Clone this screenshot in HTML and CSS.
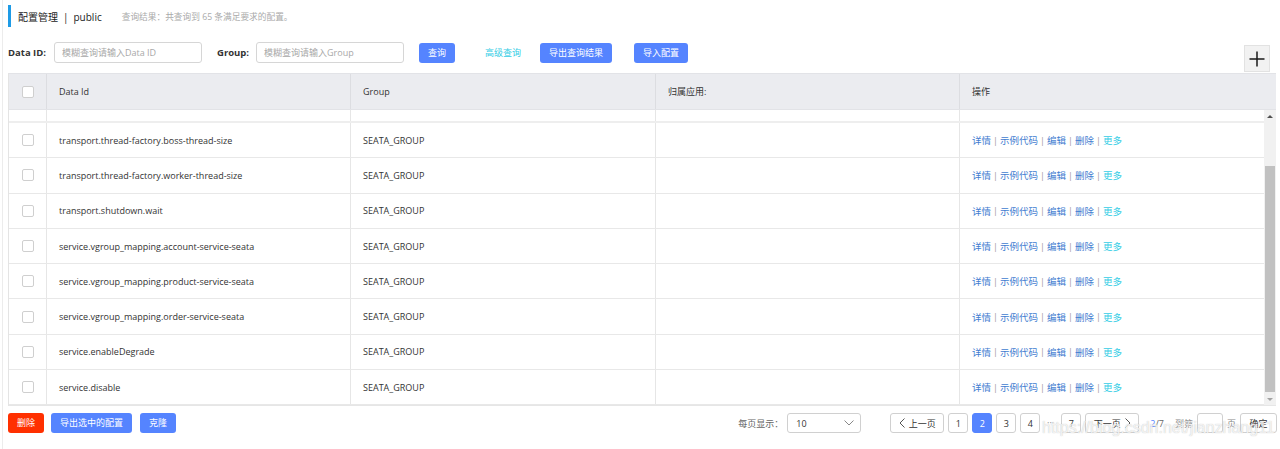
FILE: index.html
```html
<!DOCTYPE html>
<html lang="zh-CN">
<head>
<meta charset="utf-8">
<title>配置管理 | public</title>
<link rel="stylesheet" href="styles.css">
</head>
<body>
<div class="page">
  <div class="title-bar">
    <span class="title">配置管理<span class="title-sep">|</span>public</span>
    <span class="subtitle">查询结果：共查询到 65 条满足要求的配置。</span>
  </div>

  <div class="search">
    <label class="field-label label-id">Data ID:</label>
    <input class="input" type="text" placeholder="模糊查询请输入Data ID">
    <label class="field-label label-group">Group:</label>
    <input class="input" type="text" placeholder="模糊查询请输入Group">
    <button class="btn btn-primary btn-query">查询</button>
    <a class="link-advanced">高级查询</a>
    <button class="btn btn-primary btn-export">导出查询结果</button>
    <button class="btn btn-primary btn-import">导入配置</button>
    <button class="btn-add" aria-label="新建配置">
      <svg width="16" height="16" viewBox="0 0 16 16"><path d="M8 0.5V15.5M0.5 8H15.5" stroke="#1a1a1a" stroke-width="1.5" fill="none"/></svg>
    </button>
  </div>

  <div class="table">
    <div class="thead">
      <div class="cell cell-check"><span class="checkbox"></span></div>
      <div class="cell">Data Id</div>
      <div class="cell">Group</div>
      <div class="cell">归属应用:</div>
      <div class="cell cell-last">操作</div>
    </div>
    <div class="tbody">
      <div class="viewport">
        <div class="rows">
          <div class="row row-prev">
            <div class="cell cell-check"></div>
            <div class="cell"></div>
            <div class="cell"></div>
            <div class="cell"></div>
            <div class="cell cell-last"></div>
          </div>
          <div class="row">
            <div class="cell cell-check"><span class="checkbox"></span></div>
            <div class="cell">transport.thread-factory.boss-thread-size</div>
            <div class="cell">SEATA_GROUP</div>
            <div class="cell"></div>
            <div class="cell cell-last actions"><a class="act">详情</a><span class="sep">|</span><a class="act">示例代码</a><span class="sep">|</span><a class="act">编辑</a><span class="sep">|</span><a class="act">删除</a><span class="sep">|</span><a class="act act-more">更多</a></div>
          </div>
          <div class="row">
            <div class="cell cell-check"><span class="checkbox"></span></div>
            <div class="cell">transport.thread-factory.worker-thread-size</div>
            <div class="cell">SEATA_GROUP</div>
            <div class="cell"></div>
            <div class="cell cell-last actions"><a class="act">详情</a><span class="sep">|</span><a class="act">示例代码</a><span class="sep">|</span><a class="act">编辑</a><span class="sep">|</span><a class="act">删除</a><span class="sep">|</span><a class="act act-more">更多</a></div>
          </div>
          <div class="row">
            <div class="cell cell-check"><span class="checkbox"></span></div>
            <div class="cell">transport.shutdown.wait</div>
            <div class="cell">SEATA_GROUP</div>
            <div class="cell"></div>
            <div class="cell cell-last actions"><a class="act">详情</a><span class="sep">|</span><a class="act">示例代码</a><span class="sep">|</span><a class="act">编辑</a><span class="sep">|</span><a class="act">删除</a><span class="sep">|</span><a class="act act-more">更多</a></div>
          </div>
          <div class="row">
            <div class="cell cell-check"><span class="checkbox"></span></div>
            <div class="cell">service.vgroup_mapping.account-service-seata</div>
            <div class="cell">SEATA_GROUP</div>
            <div class="cell"></div>
            <div class="cell cell-last actions"><a class="act">详情</a><span class="sep">|</span><a class="act">示例代码</a><span class="sep">|</span><a class="act">编辑</a><span class="sep">|</span><a class="act">删除</a><span class="sep">|</span><a class="act act-more">更多</a></div>
          </div>
          <div class="row">
            <div class="cell cell-check"><span class="checkbox"></span></div>
            <div class="cell">service.vgroup_mapping.product-service-seata</div>
            <div class="cell">SEATA_GROUP</div>
            <div class="cell"></div>
            <div class="cell cell-last actions"><a class="act">详情</a><span class="sep">|</span><a class="act">示例代码</a><span class="sep">|</span><a class="act">编辑</a><span class="sep">|</span><a class="act">删除</a><span class="sep">|</span><a class="act act-more">更多</a></div>
          </div>
          <div class="row">
            <div class="cell cell-check"><span class="checkbox"></span></div>
            <div class="cell">service.vgroup_mapping.order-service-seata</div>
            <div class="cell">SEATA_GROUP</div>
            <div class="cell"></div>
            <div class="cell cell-last actions"><a class="act">详情</a><span class="sep">|</span><a class="act">示例代码</a><span class="sep">|</span><a class="act">编辑</a><span class="sep">|</span><a class="act">删除</a><span class="sep">|</span><a class="act act-more">更多</a></div>
          </div>
          <div class="row">
            <div class="cell cell-check"><span class="checkbox"></span></div>
            <div class="cell">service.enableDegrade</div>
            <div class="cell">SEATA_GROUP</div>
            <div class="cell"></div>
            <div class="cell cell-last actions"><a class="act">详情</a><span class="sep">|</span><a class="act">示例代码</a><span class="sep">|</span><a class="act">编辑</a><span class="sep">|</span><a class="act">删除</a><span class="sep">|</span><a class="act act-more">更多</a></div>
          </div>
          <div class="row">
            <div class="cell cell-check"><span class="checkbox"></span></div>
            <div class="cell">service.disable</div>
            <div class="cell">SEATA_GROUP</div>
            <div class="cell"></div>
            <div class="cell cell-last actions"><a class="act">详情</a><span class="sep">|</span><a class="act">示例代码</a><span class="sep">|</span><a class="act">编辑</a><span class="sep">|</span><a class="act">删除</a><span class="sep">|</span><a class="act act-more">更多</a></div>
          </div>
        </div>
      </div>
      <div class="scrollbar">
        <span class="sb-btn"><span class="tri tri-up"></span></span>
        <div class="sb-track"><div class="sb-thumb"></div></div>
        <span class="sb-btn"><span class="tri tri-down"></span></span>
      </div>
    </div>
  </div>

  <div class="footer">
    <button class="btn btn-danger">删除</button>
    <button class="btn btn-primary btn-export-sel">导出选中的配置</button>
    <button class="btn btn-primary btn-clone">克隆</button>

    <div class="pager">
      <span class="pager-label">每页显示：</span>
      <div class="select">
        <span>10</span>
        <svg width="10" height="6" viewBox="0 0 10 6"><path d="M0.5 0.5L5 5L9.5 0.5" stroke="#888" stroke-width="1" fill="none"/></svg>
      </div>
      <button class="pg pg-prev">
        <svg width="6" height="10" viewBox="0 0 6 10"><path d="M5.5 0.5L1 5L5.5 9.5" stroke="#555" stroke-width="1" fill="none"/></svg>
        <span>上一页</span>
      </button>
      <button class="pg pg-num">1</button>
      <button class="pg pg-num pg-active">2</button>
      <button class="pg pg-num">3</button>
      <button class="pg pg-num">4</button>
      <span class="pg-ellipsis">•••</span>
      <button class="pg pg-num">7</button>
      <button class="pg pg-next">
        <span>下一页</span>
        <svg width="6" height="10" viewBox="0 0 6 10"><path d="M0.5 0.5L5 5L0.5 9.5" stroke="#555" stroke-width="1" fill="none"/></svg>
      </button>
      <span class="pg-count"><em>2</em>/7</span>
      <span class="pg-goto">到第</span>
      <input class="pg-input" type="text">
      <span class="pg-unit">页</span>
      <button class="pg pg-ok">确定</button>
    </div>
  </div>

  <div class="watermark">https://blog.csdn.net/jianzhang11</div>
</div>
</body>
</html>
```

FILE: styles.css
```css
* {
  box-sizing: border-box;
}

html,
body {
  margin: 0;
  padding: 0;
  background: #fff;
}

body {
  font-family: "Open Sans", "Noto Sans CJK SC", sans-serif;
  font-size: 9px;
  color: #333;
}

.page {
  position: relative;
  width: 1278px;
  height: 449px;
  margin-left: 2px;
  border-left: 1px solid #ececec;
  padding: 5px 4px 0 5px;
  overflow: hidden;
}

/* title */
.title-bar {
  display: flex;
  align-items: center;
  height: 22px;
  border-left: 3px solid #1e9be6;
  padding-left: 7px;
}

.title {
  font-size: 10px;
  color: #222;
}

.title-sep {
  margin: 0 5px;
}

.subtitle {
  margin-left: 20px;
  font-size: 8.7px;
  color: #aaa;
}

/* search */
.search {
  display: flex;
  align-items: flex-start;
  height: 29px;
  margin-top: 15px;
}

.field-label {
  font-weight: 700;
  font-size: 9.5px;
  line-height: 21px;
  color: #333;
}

.label-id {
  width: 46px;
}

.label-group {
  width: 39px;
  margin-left: 15px;
}

.input {
  width: 148px;
  height: 21px;
  border: 1px solid #d6d6d6;
  border-radius: 3px;
  padding: 0 7px;
  font-family: inherit;
  font-size: 9px;
  color: #333;
  outline: none;
}

.input::placeholder {
  color: #a8a8a8;
}

.btn {
  height: 20px;
  padding: 0 9px;
  border: 0;
  border-radius: 3px;
  font-family: inherit;
  font-size: 9px;
  color: #fff;
  line-height: 20px;
  cursor: pointer;
}

.btn-primary {
  background: #5584ff;
}

.btn-danger {
  background: #ff3000;
}

.search .btn {
  margin-top: 1px;
}

.btn-query {
  margin-left: 15px;
}

.link-advanced {
  margin-left: 30px;
  line-height: 22px;
  color: #33cde5;
  cursor: pointer;
}

.btn-export {
  margin-left: 19px;
}

.btn-import {
  margin-left: 22px;
}

.btn-add {
  display: flex;
  align-items: center;
  justify-content: center;
  width: 26px;
  height: 27px;
  margin-left: auto;
  margin-right: 6px;
  margin-top: 3px;
  padding: 0;
  background: #f2f2f2;
  border: 1px solid #e2e2e2;
  cursor: pointer;
}

/* table */
.table {
  margin-top: 2px;
  border-left: 1px solid #e4e4e4;
}

.thead,
.row {
  display: grid;
  grid-template-columns: 38px 304px 305px 304px 1fr;
}

.thead {
  height: 37px;
  background: #ebecf0;
  border-top: 1px solid #e2e3e7;
  border-bottom: 1px solid #e2e3e7;
}

.cell {
  display: flex;
  align-items: center;
  padding-left: 12px;
  border-right: 1px solid #e6e6e6;
  white-space: nowrap;
  overflow: hidden;
}

.thead .cell {
  border-right-color: #dcdde1;
}

.cell-last {
  border-right: 0;
}

.cell-check {
  justify-content: center;
  padding-left: 0;
}

.checkbox {
  width: 12px;
  height: 12px;
  border: 1px solid #cfcfcf;
  border-radius: 2px;
  background: #fff;
}

.tbody {
  display: flex;
  height: 296px;
  border-bottom: 1px solid #e6e6e6;
}

.viewport {
  flex: 1;
  height: 295px;
  overflow: hidden;
}

.rows {
  margin-top: -22.3px;
}

.row {
  height: 35.3px;
  border-bottom: 1px solid #e8e8e8;
  font-size: 9px;
  color: #333;
}

.row-prev {
  border-bottom: 2px solid #eeeeee;
}

.actions {
  font-size: 9.5px;
}

.act {
  color: #3f7cd0;
  cursor: pointer;
}

.act-more {
  color: #33cde5;
}

.sep {
  margin: 0 2px;
  color: #999;
  font-size: 9px;
}

/* fake scrollbar */
.scrollbar {
  display: flex;
  flex-direction: column;
  width: 12px;
  background: #f1f1f1;
}

.sb-btn {
  display: flex;
  align-items: center;
  justify-content: center;
  height: 12px;
}

.tri {
  width: 0;
  height: 0;
  border-left: 3px solid transparent;
  border-right: 3px solid transparent;
}

.tri-up {
  border-bottom: 3px solid #505050;
}

.tri-down {
  border-top: 3px solid #a3a3a3;
}

.sb-track {
  flex: 1;
}

.sb-thumb {
  height: 226px;
  margin: 44px 1px 0;
  background: #c1c1c1;
}

/* footer */
.footer {
  display: flex;
  align-items: center;
  height: 20px;
  margin-top: 7px;
}

.btn-export-sel {
  margin-left: 7px;
}

.btn-clone {
  margin-left: 8px;
}

.pager {
  display: flex;
  align-items: center;
  margin-left: auto;
  margin-right: -1px;
  color: #333;
}

.pager-label {
  color: #666;
  margin-right: 4px;
}

.select {
  display: flex;
  align-items: center;
  justify-content: space-between;
  width: 74px;
  height: 20px;
  padding: 0 6px 0 8px;
  border: 1px solid #d0d0d0;
  border-radius: 3px;
  font-size: 9px;
}

.pg {
  display: flex;
  align-items: center;
  justify-content: center;
  height: 20px;
  padding: 0;
  border: 1px solid #d0d0d0;
  border-radius: 3px;
  background: #fff;
  font-family: inherit;
  font-size: 9px;
  color: #333;
  cursor: pointer;
}

.pg-prev,
.pg-next {
  width: 54px;
  gap: 4px;
}

.pg-prev {
  margin-left: 29px;
}

.pg-num {
  width: 20px;
  margin-left: 4px;
}

.pg-active {
  background: #5584ff;
  border-color: #5584ff;
  color: #fff;
}

.pg-ellipsis {
  width: 13px;
  margin-left: 4px;
  text-align: center;
  font-size: 5px;
  letter-spacing: 0.5px;
  color: #999;
}

.pg-next {
  margin-left: 4px;
}

.pg-count {
  margin-left: 11px;
  color: #666;
}

.pg-count em {
  font-style: normal;
  color: #5584ff;
}

.pg-goto {
  margin-left: 11px;
  color: #888;
}

.pg-input {
  width: 26px;
  height: 20px;
  margin-left: 4px;
  border: 1px solid #d0d0d0;
  border-radius: 3px;
  outline: none;
}

.pg-unit {
  margin-left: 4px;
  color: #888;
}

.pg-ok {
  width: 37px;
  margin-left: 4px;
}

/* watermark overlay */
.watermark {
  position: absolute;
  left: 1039px;
  top: 419px;
  font-family: "Liberation Sans", sans-serif;
  font-size: 16px;
  color: rgba(255, 255, 255, 0.8);
  text-shadow: 0 0 1px rgba(140, 140, 140, 0.6);
  white-space: nowrap;
  pointer-events: none;
}
```
